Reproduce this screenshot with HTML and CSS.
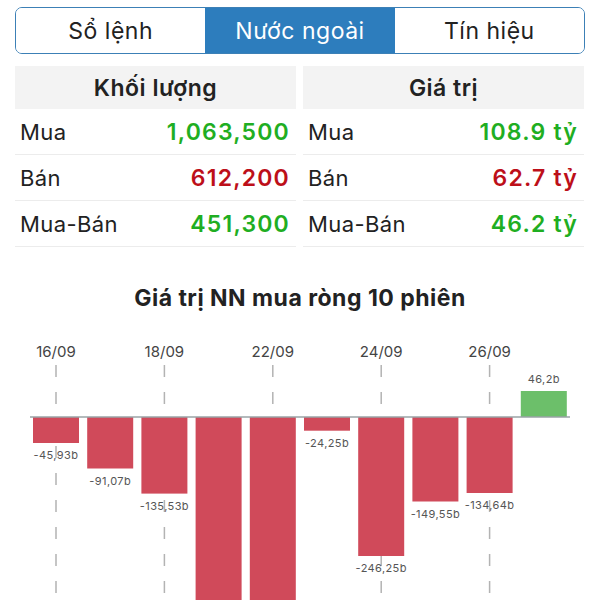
FILE: index.html
```html
<!DOCTYPE html>
<html lang="vi">
<head>
    <meta charset="UTF-8">
    <meta name="viewport" content="width=device-width, initial-scale=1.0">
    <title>Nước ngoài</title>
    <link rel="stylesheet" href="styles.css">
</head>
<body>
    <div class="screen">
        <nav class="segmented">
            <button class="segment">Sổ lệnh</button>
            <button class="segment active">Nước ngoài</button>
            <button class="segment">Tín hiệu</button>
        </nav>

        <div class="panels">
            <div class="panel">
                <div class="panel-head">Khối lượng</div>
                <div class="row"><span>Mua</span><span class="val up">1,063,500</span></div>
                <div class="row"><span>Bán</span><span class="val down">612,200</span></div>
                <div class="row"><span>Mua-Bán</span><span class="val up">451,300</span></div>
            </div>
            <div class="panel">
                <div class="panel-head">Giá trị</div>
                <div class="row"><span>Mua</span><span class="val up">108.9 tỷ</span></div>
                <div class="row"><span>Bán</span><span class="val down">62.7 tỷ</span></div>
                <div class="row"><span>Mua-Bán</span><span class="val up">46.2 tỷ</span></div>
            </div>
        </div>

        <section class="chart">
            <h2>Giá trị NN mua ròng 10 phiên</h2>
            <svg class="bars" width="600" height="290" viewBox="0 0 600 290">
                <!-- grid -->
                <g class="grid">
                    <line x1="56" y1="55" x2="56" y2="290"/>
                    <line x1="164.4" y1="55" x2="164.4" y2="290"/>
                    <line x1="272.8" y1="55" x2="272.8" y2="290"/>
                    <line x1="381.2" y1="55" x2="381.2" y2="290"/>
                    <line x1="489.6" y1="55" x2="489.6" y2="290"/>
                </g>
                <g class="dates">
                    <text x="56" y="47">16/09</text>
                    <text x="164.4" y="47">18/09</text>
                    <text x="272.8" y="47">22/09</text>
                    <text x="381.2" y="47">24/09</text>
                    <text x="489.6" y="47">26/09</text>
                </g>

                <!-- bars, 0.565px per b -->
                <g class="neg">
                    <rect x="33" y="107" width="46" height="26"/>
                    <rect x="87.2" y="107" width="46" height="51.5"/>
                    <rect x="141.4" y="107" width="46" height="76.6"/>
                    <rect x="195.6" y="107" width="46" height="200"/>
                    <rect x="249.8" y="107" width="46" height="200"/>
                    <rect x="304" y="107" width="46" height="13.7"/>
                    <rect x="358.2" y="107" width="46" height="139"/>
                    <rect x="412.4" y="107" width="46" height="84.5"/>
                    <rect x="466.6" y="107" width="46" height="76"/>
                </g>
                <rect class="pos" x="520.8" y="81" width="46" height="26"/>

                <line class="axis" x1="30" y1="107" x2="570" y2="107"/>

                <g class="labels">
                    <text x="56" y="149">-45,93b</text>
                    <text x="110.2" y="174.5">-91,07b</text>
                    <text x="164.4" y="199.6">-135,53b</text>
                    <text x="327" y="136.7">-24,25b</text>
                    <text x="381.2" y="262">-246,25b</text>
                    <text x="435.4" y="207.5">-149,55b</text>
                    <text x="489.6" y="199">-134,64b</text>
                    <text x="543.8" y="73">46,2b</text>
                </g>
            </svg>
        </section>
    </div>
</body>
</html>
```

FILE: styles.css
```css
:root {
    --blue: #2d7dbd;
    --border: #3c80b6;
    --green: #1fae22;
    --red: #bd0f19;
    --bar-red: #d04a5a;
    --bar-green: #6cbf6a;
    --head-bg: #f3f3f3;
    --line: #ececec;
    --text: #222;
}

* {
    box-sizing: border-box;
    margin: 0;
    padding: 0;
}

html, body {
    width: 600px;
    height: 600px;
    overflow: hidden;
    background: white;
}

body {
    font-family: Inter, Roboto, "Noto Sans", sans-serif;
    color: var(--text);
}

.screen {
    padding: 7px 15px 0;
}

.segmented {
    display: grid;
    grid-template-columns: 1fr 1fr 1fr;
    height: 47px;
    border: 1.5px solid var(--border);
    border-radius: 7px;
    overflow: hidden;
}

.segment {
    font-family: inherit;
    font-size: 23px;
    color: var(--text);
    background: white;
    border: none;
    letter-spacing: 0.5px;
}

.segment.active {
    background: var(--blue);
    color: white;
}

.panels {
    display: grid;
    grid-template-columns: 281px 281px;
    gap: 7px;
    margin-top: 12px;
}

.panel-head {
    height: 43px;
    background: var(--head-bg);
    display: flex;
    align-items: center;
    justify-content: center;
    font-size: 23px;
    font-weight: 600;
    letter-spacing: 0.5px;
}

.row {
    display: flex;
    justify-content: space-between;
    align-items: center;
    height: 46px;
    padding: 0 7px 0 5px;
    border-bottom: 1px solid var(--line);
    font-size: 22px;
    letter-spacing: 0.4px;
}

.row:first-of-type {
    padding-top: 3px;
}

.val {
    font-size: 23px;
    font-weight: 600;
    letter-spacing: 1.2px;
    margin-right: -1px;
}

.up { color: var(--green); }
.down { color: var(--red); }

.chart h2 {
    margin-top: 38px;
    margin-left: -15px;
    margin-right: -15px;
    text-align: center;
    font-size: 23px;
    font-weight: 700;
    line-height: 26px;
    letter-spacing: 0.5px;
}

.bars {
    display: block;
    margin: -1px -15px 0;
}

.grid line {
    stroke: #b3b3b3;
    stroke-width: 1.5;
    stroke-dasharray: 12 15;
}

.dates text {
    font-size: 15px;
    fill: #444;
    text-anchor: middle;
}

.neg rect { fill: var(--bar-red); }
.pos { fill: var(--bar-green); }

.axis {
    stroke: #9aa3a6;
    stroke-width: 1.5;
}

.labels text {
    font-size: 11px;
    letter-spacing: 0.4px;
    fill: #555;
    text-anchor: middle;
}
```
